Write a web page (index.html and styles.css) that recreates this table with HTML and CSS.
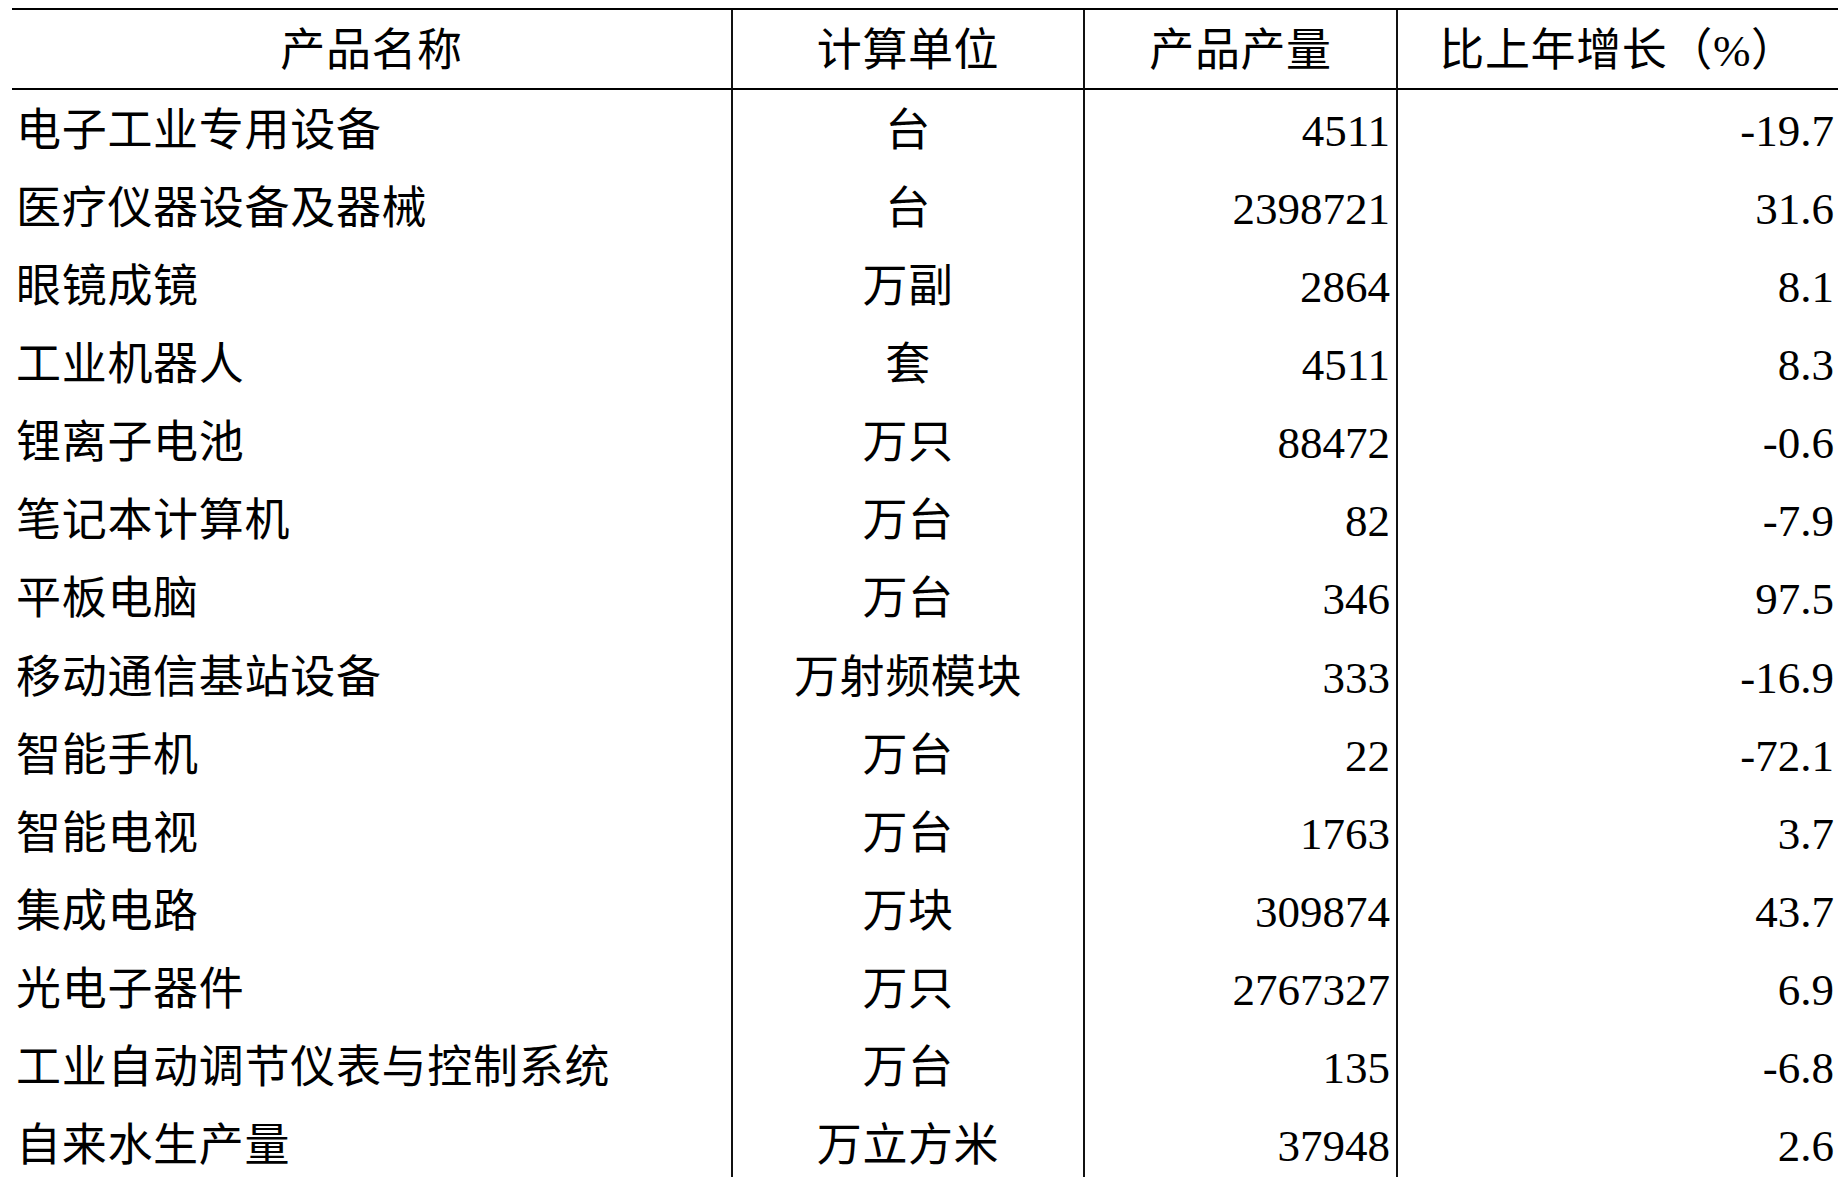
FILE: index.html
```html
<!DOCTYPE html>
<html lang="zh-CN">
<head>
<meta charset="utf-8">
<link rel="stylesheet" href="styles.css">
</head>
<body>
<table class="stats">
  <colgroup>
    <col class="c-name"><col class="c-unit"><col class="c-qty"><col class="c-growth">
  </colgroup>
  <thead>
    <tr><th>产品名称</th><th class="sep">计算单位</th><th class="sep">产品产量</th><th class="sep">比上年增长（%）</th></tr>
  </thead>
  <tbody>
    <tr><td class="name">电子工业专用设备</td><td class="unit sep">台</td><td class="num sep">4511</td><td class="num last sep">-19.7</td></tr>
    <tr><td class="name">医疗仪器设备及器械</td><td class="unit sep">台</td><td class="num sep">2398721</td><td class="num last sep">31.6</td></tr>
    <tr><td class="name">眼镜成镜</td><td class="unit sep">万副</td><td class="num sep">2864</td><td class="num last sep">8.1</td></tr>
    <tr><td class="name">工业机器人</td><td class="unit sep">套</td><td class="num sep">4511</td><td class="num last sep">8.3</td></tr>
    <tr><td class="name">锂离子电池</td><td class="unit sep">万只</td><td class="num sep">88472</td><td class="num last sep">-0.6</td></tr>
    <tr><td class="name">笔记本计算机</td><td class="unit sep">万台</td><td class="num sep">82</td><td class="num last sep">-7.9</td></tr>
    <tr><td class="name">平板电脑</td><td class="unit sep">万台</td><td class="num sep">346</td><td class="num last sep">97.5</td></tr>
    <tr><td class="name">移动通信基站设备</td><td class="unit sep">万射频模块</td><td class="num sep">333</td><td class="num last sep">-16.9</td></tr>
    <tr><td class="name">智能手机</td><td class="unit sep">万台</td><td class="num sep">22</td><td class="num last sep">-72.1</td></tr>
    <tr><td class="name">智能电视</td><td class="unit sep">万台</td><td class="num sep">1763</td><td class="num last sep">3.7</td></tr>
    <tr><td class="name">集成电路</td><td class="unit sep">万块</td><td class="num sep">309874</td><td class="num last sep">43.7</td></tr>
    <tr><td class="name">光电子器件</td><td class="unit sep">万只</td><td class="num sep">2767327</td><td class="num last sep">6.9</td></tr>
    <tr><td class="name">工业自动调节仪表与控制系统</td><td class="unit sep">万台</td><td class="num sep">135</td><td class="num last sep">-6.8</td></tr>
    <tr><td class="name">自来水生产量</td><td class="unit sep">万立方米</td><td class="num sep">37948</td><td class="num last sep">2.6</td></tr>
  </tbody>
</table>
</body>
</html>
```

FILE: styles.css
```css
html, body {
  margin: 0;
  padding: 0;
  background: #fff;
  overflow: hidden;
}

body {
  padding: 8px 0 0 12px;
  font-family: "Liberation Serif", "Noto Sans CJK SC", serif;
  font-size: 45px;
  color: #000;
}

.stats {
  border-collapse: separate;
  border-spacing: 0;
  table-layout: fixed;
  width: 1826px;
  border-top: 2px solid #000;
}

.c-name { width: 719px; }
.c-unit { width: 352px; }
.c-qty { width: 313px; }
.c-growth { width: 442px; }

.stats th {
  font-weight: normal;
  height: 74px;
  padding: 4px 0 0 0;
  text-align: center;
  vertical-align: middle;
  border-bottom: 2px solid #000;
  line-height: 1;
  letter-spacing: 0.6px;
}

.stats td {
  height: 74.15px;
  padding: 4px 0 0 0;
  vertical-align: middle;
  line-height: 1;
  white-space: nowrap;
}

.stats .sep {
  border-left: 2px solid #111;
}

.name {
  text-align: left;
  padding-left: 4px !important;
  letter-spacing: 0.7px;
}

.unit {
  text-align: center;
  letter-spacing: 0.6px;
}

.num {
  text-align: right;
  padding-right: 6px !important;
}

.num.last {
  padding-right: 4px !important;
}
```
